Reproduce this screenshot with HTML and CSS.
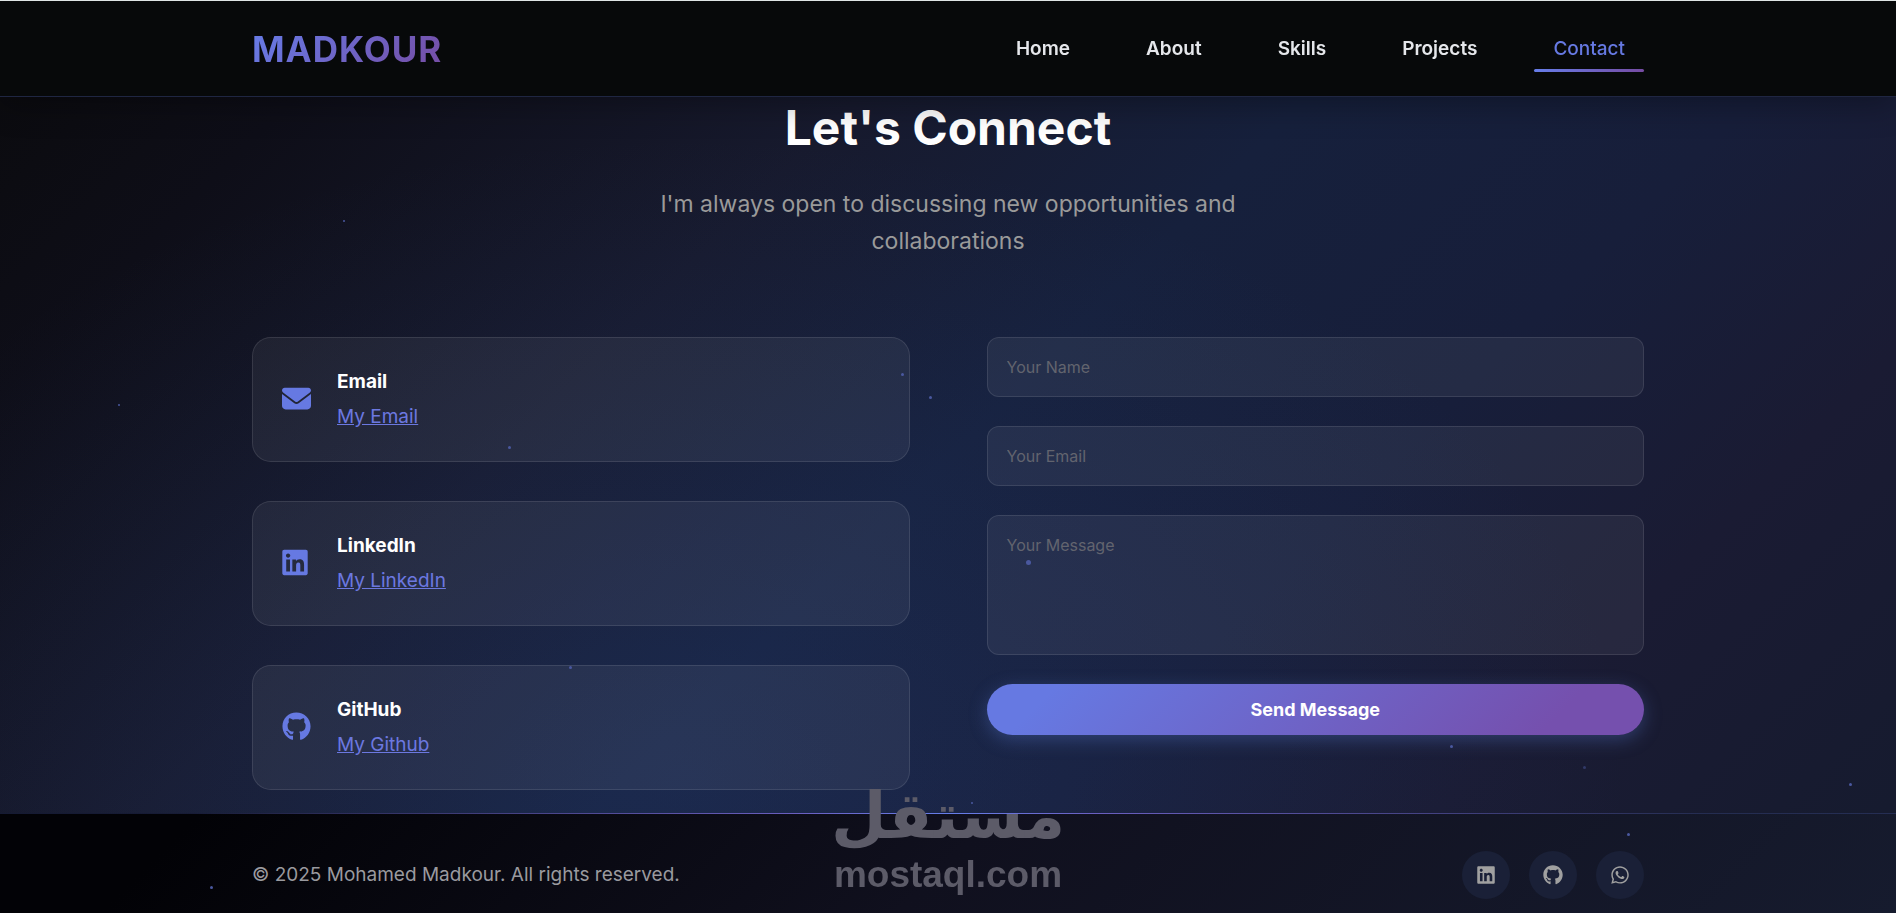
FILE: index.html
```html
<!DOCTYPE html>
<html lang="en">
<head>
    <meta charset="UTF-8">
    <meta name="viewport" content="width=device-width, initial-scale=1.0">
    <title>Madkour</title>
    <link rel="stylesheet" href="styles.css">
</head>
<body>
    <!-- Icons -->
    <svg class="icon-defs" aria-hidden="true">
        <symbol id="icon-email" viewBox="0 0 512 512">
            <path d="M48 64C21.5 64 0 85.5 0 112c0 15.1 7.1 29.3 19.2 38.4L236.8 313.6c11.4 8.5 27 8.5 38.4 0L492.8 150.4c12.1-9.1 19.2-23.3 19.2-38.4c0-26.5-21.5-48-48-48L48 64zM0 176L0 384c0 35.3 28.7 64 64 64l384 0c35.3 0 64-28.7 64-64l0-208L294.4 339.2c-22.8 17.1-54 17.1-76.8 0L0 176z"/>
        </symbol>
        <symbol id="icon-linkedin" viewBox="0 0 448 512">
            <path d="M416 32H31.9C14.3 32 0 46.5 0 64.3v383.4C0 465.5 14.3 480 31.9 480H416c17.6 0 32-14.5 32-32.3V64.3c0-17.8-14.4-32.3-32-32.3zM135.4 416H69V202.2h66.5V416zm-33.2-243c-21.3 0-38.5-17.3-38.5-38.5S80.9 96 102.2 96c21.2 0 38.5 17.3 38.5 38.5 0 21.3-17.2 38.5-38.5 38.5zm282.1 243h-66.4V312c0-24.8-.5-56.7-34.5-56.7-34.6 0-39.9 27-39.9 54.9V416h-66.4V202.2h63.7v29.2h.9c8.9-16.8 30.6-34.5 62.9-34.5 67.2 0 79.7 44.3 79.7 101.9V416z"/>
        </symbol>
        <symbol id="icon-github" viewBox="0 0 496 512">
            <path d="M165.9 397.4c0 2-2.3 3.6-5.2 3.6-3.3.3-5.6-1.3-5.6-3.6 0-2 2.3-3.6 5.2-3.6 3-.3 5.6 1.3 5.6 3.6zm-31.1-4.5c-.7 2 1.3 4.3 4.3 4.9 2.6 1 5.6 0 6.2-2s-1.3-4.3-4.3-5.2c-2.6-.7-5.5.3-6.2 2.3zm44.2-1.7c-2.9.7-4.9 2.6-4.6 4.9.3 2 2.9 3.3 5.9 2.6 2.9-.7 4.9-2.6 4.6-4.6-.3-1.9-3-3.2-5.9-2.9zM244.8 8C106.1 8 0 113.3 0 252c0 110.9 69.8 205.8 169.5 239.2 12.8 2.3 17.3-5.6 17.3-12.1 0-6.2-.3-40.4-.3-61.4 0 0-70 15-84.7-29.8 0 0-11.4-29.1-27.8-36.6 0 0-22.9-15.7 1.6-15.4 0 0 24.9 2 38.6 25.8 21.9 38.6 58.6 27.5 72.9 20.9 2.3-16 8.8-27.1 16-33.7-55.9-6.2-112.3-14.3-112.3-110.5 0-27.5 7.6-41.3 23.6-58.9-2.6-6.5-11.1-33.3 2.6-67.9 20.9-6.5 69 27 69 27 20-5.6 41.5-8.5 62.8-8.5s42.8 2.9 62.8 8.5c0 0 48.1-33.6 69-27 13.7 34.7 5.2 61.4 2.6 67.9 16 17.7 25.8 31.5 25.8 58.9 0 96.5-58.9 104.2-114.8 110.5 9.2 7.9 17 22.9 17 46.4 0 33.7-.3 75.4-.3 83.6 0 6.5 4.6 14.4 17.3 12.1C428.2 457.8 496 362.9 496 252 496 113.3 383.5 8 244.8 8z"/>
        </symbol>
        <symbol id="icon-whatsapp" viewBox="0 0 448 512">
            <path d="M380.9 97.1C339 55.1 283.2 32 223.9 32c-122.4 0-222 99.6-222 222 0 39.1 10.2 77.3 29.6 111L0 480l117.7-30.9c32.4 17.7 68.9 27 106.1 27h.1c122.3 0 224.1-99.6 224.1-222 0-59.3-25.2-115-67.1-157zm-157 341.6c-33.2 0-65.7-8.9-94-25.7l-6.7-4-69.8 18.3L72 359.2l-4.4-7c-18.5-29.4-28.2-63.3-28.2-98.2 0-101.7 82.8-184.5 184.6-184.5 49.3 0 95.6 19.2 130.4 54.1 34.8 34.9 56.2 81.2 56.1 130.5 0 101.8-84.9 184.6-186.6 184.6zm101.2-138.2c-5.5-2.8-32.8-16.2-37.9-18-5.1-1.9-8.8-2.8-12.5 2.8-3.7 5.6-14.3 18-17.6 21.8-3.2 3.7-6.5 4.2-12 1.4-32.6-16.3-54-29.1-75.5-66-5.7-9.8 5.7-9.1 16.3-30.3 1.8-3.7.9-6.9-.5-9.7-1.4-2.8-12.5-30.1-17.1-41.2-4.5-10.8-9.1-9.3-12.5-9.5-3.2-.2-6.9-.2-10.6-.2-3.7 0-9.7 1.4-14.8 6.9-5.1 5.6-19.4 19-19.4 46.3 0 27.3 19.9 53.7 22.6 57.4 2.8 3.7 39.1 59.7 94.8 83.8 35.2 15.2 49 16.5 66.6 13.9 10.7-1.6 32.8-13.4 37.4-26.4 4.6-13 4.6-24.1 3.2-26.4-1.3-2.5-5-3.9-10.5-6.6z"/>
        </symbol>
    </svg>

    <nav class="navbar">
        <div class="container nav-container">
            <a href="#home" class="logo">MADKOUR</a>
            <ul class="nav-menu">
                <li><a href="#home" class="nav-link">Home</a></li>
                <li><a href="#about" class="nav-link">About</a></li>
                <li><a href="#skills" class="nav-link">Skills</a></li>
                <li><a href="#projects" class="nav-link">Projects</a></li>
                <li><a href="#contact" class="nav-link active">Contact</a></li>
            </ul>
        </div>
    </nav>

    <!-- Contact Section -->
    <main id="contact" class="contact">
        <div class="container">
            <div class="section-header">
                <h2>Let's Connect</h2>
                <p>I'm always open to discussing new opportunities and collaborations</p>
            </div>
            <div class="contact-content">
                <div class="contact-info">
                    <div class="contact-item">
                        <svg class="contact-icon" aria-hidden="true"><use href="#icon-email"/></svg>
                        <div class="contact-details">
                            <h3>Email</h3>
                            <a href="#email">My Email</a>
                        </div>
                    </div>
                    <div class="contact-item">
                        <svg class="contact-icon narrow" aria-hidden="true"><use href="#icon-linkedin"/></svg>
                        <div class="contact-details">
                            <h3>LinkedIn</h3>
                            <a href="#linkedin">My LinkedIn</a>
                        </div>
                    </div>
                    <div class="contact-item">
                        <svg class="contact-icon" aria-hidden="true"><use href="#icon-github"/></svg>
                        <div class="contact-details">
                            <h3>GitHub</h3>
                            <a href="#github">My Github</a>
                        </div>
                    </div>
                </div>
                <form class="contact-form">
                    <input type="text" name="name" placeholder="Your Name" aria-label="Your Name">
                    <input type="email" name="email" placeholder="Your Email" aria-label="Your Email">
                    <textarea name="message" placeholder="Your Message" aria-label="Your Message"></textarea>
                    <button type="submit" class="btn">Send Message</button>
                </form>
            </div>
        </div>
    </main>

    <footer class="footer">
        <div class="container footer-content">
            <p>&copy; 2025 Mohamed Madkour. All rights reserved.</p>
            <div class="social-links">
                <a href="#linkedin" aria-label="LinkedIn"><svg><use href="#icon-linkedin"/></svg></a>
                <a href="#github" aria-label="GitHub"><svg><use href="#icon-github"/></svg></a>
                <a href="#whatsapp" aria-label="WhatsApp"><svg><use href="#icon-whatsapp"/></svg></a>
            </div>
        </div>
    </footer>

    <!-- Floating particles -->
    <div class="particles" aria-hidden="true">
        <span></span><span></span><span></span><span></span><span></span>
        <span></span><span></span><span></span><span></span><span></span>
        <span></span><span></span><span></span>
    </div>

    <div class="watermark">
        <span class="watermark-ar" lang="ar" dir="rtl">مستقل</span>
        <span class="watermark-en">mostaql.com</span>
    </div>
</body>
</html>
```
FILE: styles.css
```css
* {
    margin: 0;
    padding: 0;
    box-sizing: border-box;
}
body {
    font-family: 'Inter', sans-serif;
    font-size: 19px;
    line-height: 30px;
    color: #fff;
    min-height: 100vh;
    display: flex;
    flex-direction: column;
    border-top: 1px solid #dfe5e5;
    overflow-x: hidden;
    background:
        radial-gradient(ellipse 50% 70% at 36% 85%, rgba(48, 80, 150, 0.2), transparent),
        linear-gradient(135deg, #0a0a0c 0%, #0e0e18 14%, #171a2e 34%, #16203c 50%, #171e3a 66%, #1a1b33 80%, #151b2e 100%);
}
.icon-defs {
    display: none;
}
.container {
    width: 100%;
    max-width: 1440px;
    margin: 0 auto;
    padding: 0 24px;
}

/* Navbar */
.navbar {
    position: sticky;
    top: 0;
    z-index: 10;
    background: #07090a;
    border-bottom: 1px solid rgba(102, 126, 234, 0.25);
    box-shadow: 0 8px 32px rgba(0, 0, 0, 0.3);
}
.nav-container {
    display: flex;
    justify-content: space-between;
    align-items: center;
    height: 95px;
}
.logo {
    font-size: 35px;
    font-weight: 700;
    line-height: 54px;
    letter-spacing: 1px;
    text-decoration: none;
    background: linear-gradient(135deg, #667eea 0%, #764ba2 100%);
    -webkit-background-clip: text;
    background-clip: text;
    color: transparent;
}
.nav-menu {
    display: flex;
    gap: 38px;
    list-style: none;
}
.nav-link {
    display: block;
    position: relative;
    padding: 8px 19px;
    font-weight: 600;
    color: #e5e7eb;
    text-decoration: none;
}
.nav-link.active {
    font-weight: 500;
    color: #6679e2;
}
.nav-link.active::after {
    content: '';
    position: absolute;
    left: 0;
    bottom: 0;
    width: 100%;
    height: 3px;
    border-radius: 2px;
    background: linear-gradient(135deg, #667eea, #764ba2);
}

/* Contact */
.contact {
    flex: 1;
    padding: 2px 0 23px;
}
.section-header {
    text-align: center;
    margin-bottom: 77px;
}
.section-header h2 {
    font-size: 48px;
    font-weight: 700;
    line-height: 58px;
    margin-bottom: 29px;
}
.section-header p {
    max-width: 720px;
    margin: 0 auto;
    font-size: 23px;
    line-height: 37px;
    color: #9a9a9a;
}
.contact-content {
    display: grid;
    grid-template-columns: 1fr 1fr;
    gap: 77px;
}
.contact-info {
    display: flex;
    flex-direction: column;
    gap: 39px;
}
.contact-item {
    display: flex;
    align-items: center;
    gap: 26px;
    padding: 29px;
    background: rgba(255, 255, 255, 0.06);
    border: 1px solid rgba(255, 255, 255, 0.1);
    border-radius: 19px;
}
.contact-icon {
    width: 29px;
    height: 29px;
    margin-bottom: 3px;
    fill: #6679e2;
}
.contact-icon.narrow {
    width: 26px;
    margin-right: 3px;
}
.contact-details {
    display: flex;
    flex-direction: column;
    align-items: flex-start;
    gap: 5px;
}
.contact-details h3 {
    font-size: 19px;
    font-weight: 700;
}
.contact-details a {
    color: #6c78e0;
}
.contact-form {
    display: flex;
    flex-direction: column;
    gap: 29px;
}
.contact-form input,
.contact-form textarea {
    width: 100%;
    height: 60px;
    padding: 19px;
    font-family: inherit;
    font-size: 16px;
    line-height: 20px;
    color: #fff;
    background: rgba(255, 255, 255, 0.06);
    border: 1px solid rgba(255, 255, 255, 0.1);
    border-radius: 12px;
    outline: none;
}
.contact-form textarea {
    height: 140px;
    resize: none;
}
.contact-form ::placeholder {
    color: #62646e;
}
.btn {
    height: 51px;
    border: none;
    border-radius: 60px;
    font-family: inherit;
    font-size: 18px;
    font-weight: 700;
    color: #fff;
    background: linear-gradient(135deg, #6679e2 10%, #7550ae 85%);
    box-shadow: 0 5px 18px rgba(80, 110, 190, 0.4);
    cursor: pointer;
}

/* Footer */
.footer {
    position: relative;
    padding: 37px 0 14px;
    border-top: 1px solid rgba(102, 126, 234, 0.2);
    background: linear-gradient(135deg, #020206 10%, #10101e 50%, #161b2e 100%);
}
.footer::before {
    content: '';
    position: absolute;
    top: -1px;
    left: 0;
    width: 100%;
    height: 1px;
    background: linear-gradient(90deg, transparent 10%, #6a5fc0 42%, #667eea 50%, #6a5fc0 58%, transparent 90%);
}
.footer-content {
    display: flex;
    justify-content: space-between;
    align-items: center;
    color: #9a9a9f;
}
.social-links {
    display: flex;
    gap: 19px;
}
.social-links a {
    display: flex;
    align-items: center;
    justify-content: center;
    width: 48px;
    height: 48px;
    border-radius: 50%;
    background: #1a2037;
}
.social-links svg {
    width: 20px;
    height: 20px;
    fill: #a0a0a0;
}

/* Particles */
.particles {
    position: fixed;
    inset: 0;
    z-index: 5;
    pointer-events: none;
}
.particles span {
    position: absolute;
    width: 3px;
    height: 3px;
    border-radius: 50%;
    background: #4a589f;
}
.particles span:nth-child(1) { left: 18.1%; top: 24.1%; width: 2px; height: 2px; }
.particles span:nth-child(2) { left: 6.2%; top: 44.2%; width: 2px; height: 2px; }
.particles span:nth-child(3) { left: 47.5%; top: 40.8%; }
.particles span:nth-child(4) { left: 26.8%; top: 48.9%; }
.particles span:nth-child(5) { left: 49%; top: 43.4%; }
.particles span:nth-child(6) { left: 54.1%; top: 61.3%; width: 5px; height: 5px; }
.particles span:nth-child(7) { left: 30%; top: 73%; }
.particles span:nth-child(8) { left: 76.5%; top: 81.6%; }
.particles span:nth-child(9) { left: 83.5%; top: 83.9%; opacity: 0.5; }
.particles span:nth-child(10) { left: 97.5%; top: 85.8%; }
.particles span:nth-child(11) { left: 85.8%; top: 91.2%; }
.particles span:nth-child(12) { left: 51.2%; top: 87.8%; width: 2px; height: 2px; }
.particles span:nth-child(13) { left: 11.1%; top: 97%; }

/* Watermark */
.watermark {
    position: fixed;
    left: 0;
    right: 0;
    bottom: 17px;
    z-index: 20;
    display: flex;
    flex-direction: column;
    align-items: center;
    color: #5c5b68;
    font-weight: 700;
    pointer-events: none;
}
.watermark-ar {
    font-family: 'DejaVu Sans', sans-serif;
    font-size: 64px;
    line-height: 75px;
}
.watermark-en {
    font-family: 'Liberation Sans', sans-serif;
    font-size: 37px;
    line-height: 42px;
}
```
